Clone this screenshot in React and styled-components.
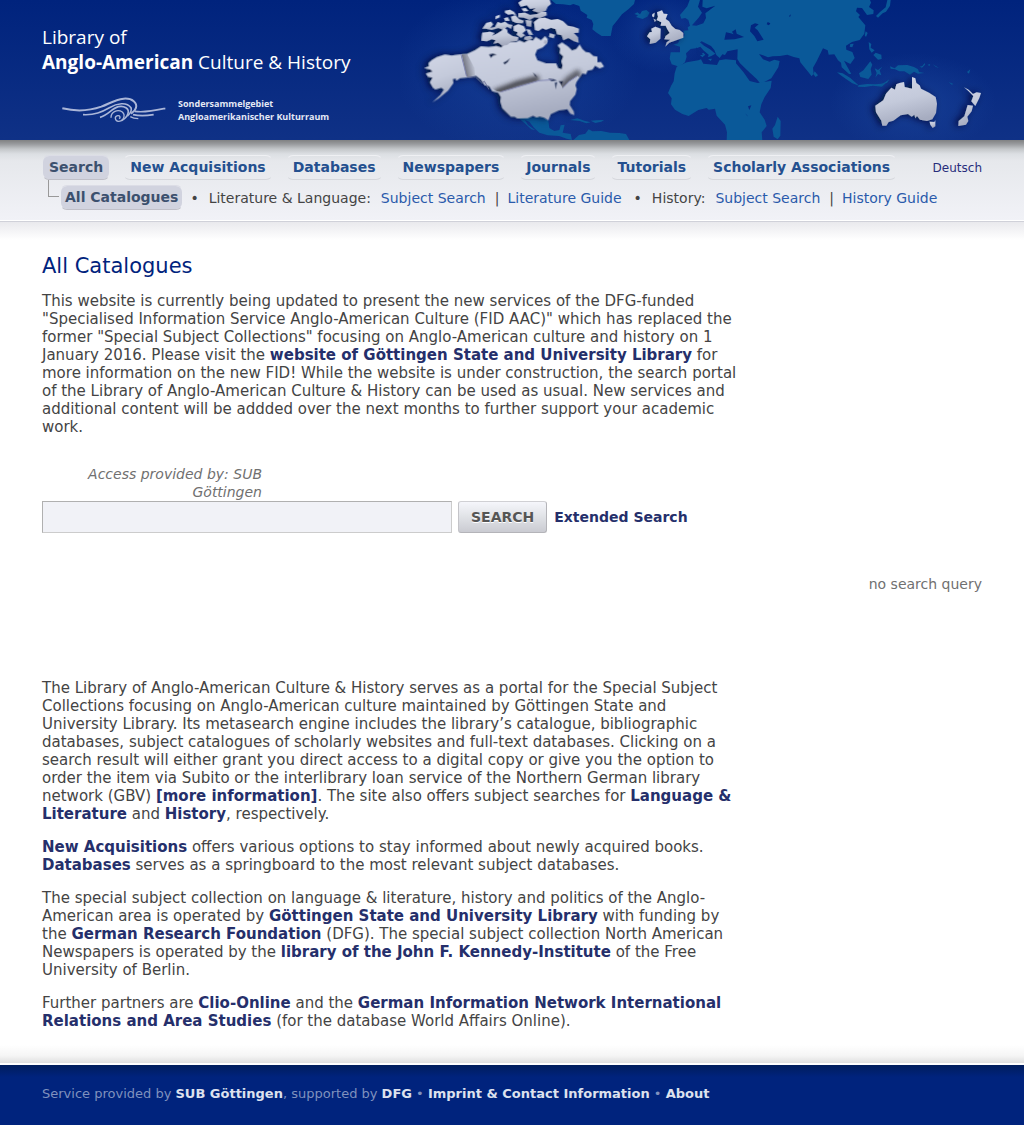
import React from 'react';
import styled, { createGlobalStyle } from 'styled-components';

const GlobalStyle = createGlobalStyle`
  *, *::before, *::after { box-sizing: border-box; }
  body {
    margin: 0;
    background: #fff;
    color: #444;
    font-family: "DejaVu Sans", Verdana, sans-serif;
    font-size: 15px;
    line-height: 18px;
  }
  a { text-decoration: none; color: inherit; }
`;

const Header = styled.header`
  display: flex;
  justify-content: space-between;
  height: 140px;
  overflow: hidden;
  padding-left: 42px;
  background: linear-gradient(#00237d, #0f3186);
  color: #fff;
`;

const Brand = styled.a`
  flex: none;
  padding-top: 25px;
  font-family: "Open Sans", "Noto Sans", sans-serif;
`;

const SiteName = styled.h1`
  margin: 0;
  font-size: 19px;
  font-weight: 400;
  line-height: 25px;
`;

const Sponsor = styled.div`
  display: flex;
  gap: 12px;
  margin-top: 22px;
  padding-left: 20px;
  font-size: 9px;
  font-weight: 700;
  line-height: 13px;
  color: #e4e9f5;
`;

const Map = styled.svg`
  flex: none;
  width: 624px;
  height: 140px;
`;

const NavPanel = styled.nav`
  display: grid;
  align-content: start;
  gap: 5px;
  min-height: 81px;
  padding: 15px 42px 10px;
  background: linear-gradient(#808182 0, #989a9d 4px, #c3c6c9 9px, #dcdfe3 14px, #e6e8ec 21px, #f1f2f7 80px);
  border-bottom: 1px solid #fff;
  font-size: 14px;
`;

const TopRow = styled.div`
  display: flex;
  justify-content: space-between;
  align-items: center;
`;

const MenuRow = styled.div`
  display: flex;
  flex-wrap: wrap;
  align-items: center;
  gap: ${(p) => p.$gap || 0}px;
`;

const MenuLink = styled.a`
  display: block;
  padding: 0 ${(p) => (p.$narrow ? 4 : 6)}px;
  border: 1px solid transparent;
  border-top-color: ${(p) => (p.$active ? '#dcdde6' : '#eff0f3')};
  border-bottom-color: ${(p) => (p.$active ? '#bfbfc8' : '#d5d7dc')};
  border-radius: 7px;
  background: ${(p) => (p.$active ? '#d1d3df' : 'transparent')};
  background-clip: padding-box;
  color: ${(p) => (p.$active ? '#3c506e' : '#24508f')};
  font-weight: 700;
  line-height: 23px;
`;

const Elbow = styled.span`
  align-self: flex-start;
  width: 11px;
  height: 17px;
  margin: -5px 1px 0 6px;
  border: solid #999;
  border-width: 0 0 1px 1px;
`;

const Dot = styled.span`
  margin: 0 10px 0 ${(p) => (p.$first ? 7 : 12)}px;
`;

const Topic = styled.span`
  margin-right: 10px;
`;

const Bar = styled.span`
  margin: 0 8px 0 9px;
`;

const SubLink = styled.a`
  color: #2a5aab;
`;

const Language = styled.a`
  color: #272d7b;
  font-size: 12px;
`;

const Main = styled.main`
  padding: 31px 42px 0;
  border-top: 1px solid #d0d1d9;
  background: linear-gradient(#e9e9ed, #fff 18px);
`;

const Column = styled.div`
  max-width: 700px;
`;

const Title = styled.h2`
  margin: 0 0 13px;
  color: #00237d;
  font-size: 21px;
  font-weight: 400;
  line-height: 26px;
`;

const Text = styled.p`
  margin: 0 0 15px;
`;

const Strong = styled.a`
  color: #252f6b;
  font-weight: 700;
`;

const Access = styled.p`
  width: 220px;
  margin: 29px 0 0;
  color: #707070;
  font-size: 14px;
  font-style: italic;
  text-align: right;
`;

const SearchForm = styled.form`
  display: flex;
  align-items: center;
  gap: 6px;
  font-size: 14px;
`;

const Query = styled.input`
  width: 410px;
  height: 32px;
  padding: 0 8px;
  border: 1px solid;
  border-color: #b0b0b0 #ccc #ccc #b0b0b0;
  background: #f1f2f7;
  font: inherit;
`;

const Submit = styled.button`
  height: 32px;
  padding: 0 12px;
  margin-right: 1px;
  border: 1px solid;
  border-color: #d0d0d4 #b4b4b9 #b4b4b9 #c4c4c9;
  border-radius: 3px;
  background: linear-gradient(#f5f6fb, #e0e2e6 50%, #cacbd2);
  color: #555;
  font: inherit;
  font-weight: 700;
  text-shadow: 0 1px 0 #fff;
`;

const Status = styled.p`
  margin: 42px 0 86px;
  color: #707070;
  font-size: 14px;
  text-align: right;
`;

const Fade = styled.div`
  height: 20px;
  background: linear-gradient(#fff, #f5f5f5 60%, #dfdfdf);
  border-bottom: 2px solid #fff;
`;

const Footer = styled.footer`
  min-height: 60px;
  padding: 20px 42px;
  background: linear-gradient(#001d5c, #00237d 12px);
  color: #7f91be;
  font-size: 13px;

  a {
    color: #dde1ee;
    font-weight: 700;
  }
`;

function WaveLogo() {
  return (
    <svg width="104" height="26" viewBox="0 0 312 78" fill="none" stroke="#aab6d8" strokeWidth="6" aria-hidden="true">
      <path d="M1 34C35 42 78 43 118 29C144 19 158 8 185 5C212 3 226 18 222 32C220 41 214 45 207 50" />
      <path d="M63 53C99 55 119 45 142 32C165 19 194 14 207 32C211 42 203 51 196 57" strokeWidth="5" />
      <path d="M114 61C139 54 148 35 169 29C186 25 203 35 198 49C195 61 186 67 178 71" strokeWidth="5" />
      <path d="M147 62C147 44 167 36 181 45C192 55 184 73 169 73C159 72 156 58 167 56C174 55 177 62 171 65" strokeWidth="4" />
      <path d="M218 43C249 48 278 41 310 34" strokeWidth="5" />
      <path d="M213 53C235 58 255 56 275 53" strokeWidth="5" />
      <path d="M205 59C211 63 220 65 229 65" strokeWidth="4" />
    </svg>
  );
}

function WorldMap() {
  return (
    <Map viewBox="0 0 1872 420" aria-hidden="true">
      <defs>
        <linearGradient id="silver" x1="0" y1="0" x2="0.3" y2="1">
          <stop offset="0" stopColor="#d2d7e7" />
          <stop offset="0.55" stopColor="#c4cadb" />
          <stop offset="1" stopColor="#a6acc0" />
        </linearGradient>
        <linearGradient id="alaskaFold" gradientUnits="userSpaceOnUse" x1="190" y1="200" x2="225" y2="193">
          <stop offset="0" stopColor="#555762" stopOpacity="0.8" />
          <stop offset="1" stopColor="#555762" stopOpacity="0" />
        </linearGradient>
        <clipPath id="aboveBorder">
          <path d="M183 163L300 120L590 130L590 190L545 236L532 228L508 244L488 264L476 241L458 239L417 242L302 276L289 273L254 254L203 232Z" />
        </clipPath>
        <filter id="lift" x="-20%" y="-20%" width="140%" height="140%">
          <feDropShadow dx="-9" dy="0" stdDeviation="11" floodColor="#000a30" floodOpacity="0.9" />
        </filter>
        <filter id="soft" x="-30%" y="-60%" width="160%" height="220%"><feGaussianBlur stdDeviation="6" /></filter>
        <radialGradient id="glow">
          <stop offset="0" stopColor="#1d4aa2" stopOpacity="0.55" />
          <stop offset="1" stopColor="#1d4aa2" stopOpacity="0" />
        </radialGradient>
      </defs>
      <ellipse cx="350" cy="210" rx="370" ry="250" fill="url(#glow)" />
      <ellipse cx="790" cy="90" rx="160" ry="130" fill="url(#glow)" />
      <ellipse cx="1540" cy="310" rx="250" ry="150" fill="url(#glow)" />

      <g fill="#0a5999">
        <path d="M453 0L468 12L489 13L510 16L520 12L538 18L542 32L562 45L560 53L575 60L580 72L577 88L590 98L605 108L632 108L638 78L652 61L666 43L686 27L702 12L705 0Z" />
        <path d="M355 354L385 350L400 352L415 350L430 352L445 362L448 384L463 393L478 390L482 376L494 374L488 398L512 402L516 420L500 416L477 408L443 406L418 398L402 383L388 365L375 360L384 375L406 391L394 388L376 371Z" />
        <path d="M510 360L532 355L553 362L572 367L559 370L539 363Z" />
        <path d="M572 362L589 361L612 360L604 365L586 369Z" />
        <path d="M520 420L537 405L556 401L566 388L577 394L604 393L630 398L658 399L678 402L688 420Z" />
        <g transform="translate(660 0)">
          <path d="M43 42L52 37L60 43L66 33L79 30L89 38L82 50L68 57L48 51L54 46Z" />
          <path fillRule="evenodd" d="M209 0L202 19L180 45L184 56L196 54L205 60L210 77L203 82L205 91L190 92L194 106L180 117L174 130L160 134L180 140L180 157L152 157L149 176L155 193L169 197L177 201L195 187L200 170L198 160L212 147L232 144L241 140L250 151L266 164L264 172L274 168L286 161L270 148L252 137L240 127L245 124L273 138L283 150L289 165L299 174L307 163L315 165L322 154L353 148L352 177L360 190L388 217L410 237L422 252L454 235L475 202L479 183L463 179L449 185L429 178L417 162L429 166L444 172L458 169L480 168L502 164L521 171L538 175L541 187L575 229L581 221L579 203L590 184L609 145L623 151L626 164L643 163L654 181L663 188L665 202L687 222L694 222L672 182L691 192L704 174L697 156L679 149L678 137L696 126L719 120L733 101L736 76L715 51L720 45L708 34L711 23L726 24L741 45L760 42L761 31L747 21L753 8L750 0Z
            M240 0L234 20L246 38L236 53L216 76L229 77L250 70L258 54L256 40L286 17L260 25L247 20L248 0Z
            M313 119L318 97L332 100L341 103L336 95L347 88L350 101L372 111L344 118Z
            M393 76L405 70L416 73L404 83L413 91L424 108L431 119L412 124L403 108L390 94Z
            M443 66L451 70L447 76L440 73Z M507 48L513 43L510 51Z" />
          <path d="M170 200L200 187L235 181L243 178L250 191L291 195L298 181L317 178L348 181L348 190L370 216L389 243L413 249L455 242L452 264L434 291L424 313L419 337L434 359L440 378L425 397L427 420L320 420L321 397L315 374L290 347L285 326L266 329L260 324L235 330L206 348L187 342L165 329L153 313L155 295L144 279L153 258L161 244L164 220Z" />
          <path d="M473 350L482 363L481 407L473 418L461 410L457 386L465 375Z" />
          <path d="M584 214L594 226L587 231L580 223Z" />
          <path d="M240 165L247 172L256 164L250 158Z M264 177L276 176L272 183Z" />
          <path fill="#082b82" d="M384 319L394 316L388 330Z M376 340L385 350L380 346Z M228 141L237 156L250 165L232 165Z" />
        </g>
        <g transform="translate(1260 0)">
          <path d="M202 0L212 0L210 17L198 35L188 40L174 53L168 48L180 36L197 22Z" />
          <path d="M137 94L143 99L138 111L134 106Z M91 132L101 131L97 142L89 140Z M146 126L154 132L152 143L164 151L155 158L148 148Z M167 158L184 164L185 177L174 179L160 165Z" />
          <path d="M51 217L68 220L90 233L108 249L117 257L97 250L78 237L62 226Z M117 255L142 252L165 253L184 251L202 245L186 260L159 257L134 261L113 260Z" />
          <path d="M151 184L157 194L152 207L155 224L145 237L121 231L117 220L130 211Z" />
          <path d="M164 205L174 210L187 200L179 211L184 226L174 222L166 233L170 219Z" />
          <path d="M210 199L224 205L234 196L262 195L282 201L294 208L297 216L313 219L294 221L282 215L270 224L253 214L238 214L225 208L212 206Z" />
          <path d="M299 200L307 198L314 189L315 194L306 203Z M323 194L331 192L328 198Z M338 193L357 204L348 201Z M386 246L400 252L395 254Z M441 216L451 208L447 221Z M192 249L208 238L201 249Z" />
        </g>
      </g>

      <g fill="url(#silver)" filter="url(#lift)">
        <path d="M183 163L155 167L135 164L111 171L96 180L86 189L87 199L73 204L91 208L98 215L78 221L84 230L98 233L90 247L99 263L106 268L124 263L132 269L121 285L97 307L116 295L144 272L160 249L158 237L167 235L169 242L180 234L203 232Z" />
        <path fillRule="evenodd" d="M183 163L201 162L225 151L243 139L266 141L289 138L304 143L312 133L330 126L349 126L358 122L373 128L388 119L399 122L407 111L423 121L435 109L443 117L440 131L428 142L411 149L405 164L412 181L437 190L468 190L474 204L485 208L488 196L484 184L490 169L479 159L481 146L473 136L486 128L504 140L516 152L529 147L539 134L547 147L557 156L568 158L580 168L592 170L592 187L603 186L612 200L599 205L585 197L577 209L562 212L558 222L547 220L529 246L526 256L530 267L526 284L510 303L509 315L521 334L523 345L511 341L502 327L476 331L452 342L445 361L433 353L419 349L410 352L399 347L383 354L352 355L344 350L333 350L320 337L307 324L301 304L303 291L295 278L277 273L268 258L254 255L243 239L228 227L203 232Z
          M266 163L278 160L291 164L278 168L273 174Z M309 188L318 183L331 174L323 187L314 194Z M398 217L407 224L413 234L405 229Z M444 235L462 237L472 242L454 244Z M464 248L472 246L467 269Z M475 243L490 243L486 257Z" />
        <g transform="translate(225 0)">
          <path d="M130 8L142 0L224 0L228 12L218 20L212 33L192 38L172 32L182 24L165 27L156 16L137 20Z" />
          <path d="M130 40L150 38L165 45L187 42L198 36L214 36L215 46L195 54L178 52L164 60L147 53L130 52Z M90 32L105 29L117 36L123 46L112 42L100 44L90 38Z M140 26L152 24L160 33L146 34Z" />
          <path d="M62 49L74 44L74 52L61 58Z M108 50L121 46L132 58L146 62L143 70L124 69L112 64Z M87 55L98 52L104 62L91 63Z M152 60L170 62L168 80L155 78Z" />
          <path d="M22 86L34 69L48 65L54 73L46 84L60 81L68 66L78 70L90 65L100 73L112 75L108 86L96 80L86 90L70 84L50 90L32 86Z" />
          <path d="M22 98L45 95L58 99L51 107L64 102L80 92L87 84L96 89L98 99L112 108L130 112L128 122L106 125L97 135L82 137L70 128L55 131L62 121L50 118L36 124L19 122Z" />
          <path d="M116 79L130 73L146 79L153 91L142 100L150 106L138 113L125 104L128 97L116 92Z M154 88L165 89L174 105L162 104Z M150 110L166 107L174 115L158 121L147 118Z" />
          <path d="M177 66L192 55L210 53L229 60L248 57L264 64L278 77L295 80L312 86L311 98L296 99L309 112L311 128L297 124L280 114L265 121L260 106L246 103L242 88L228 83L213 89L202 85L190 93L180 90Z M224 100L240 104L236 115L222 111Z M208 120L218 122L214 132L206 130Z" />
        </g>
      </g>
      <path d="M185 163L202 163L224 205L225 226L203 232L198 226Z" fill="url(#alaskaFold)" />
      <g clipPath="url(#aboveBorder)" fill="none" stroke="#33343c" filter="url(#soft)">
        <path d="M284 278L352 252L417 235" strokeWidth="18" opacity="0.9" />
        <path d="M484 266L506 240L540 216" strokeWidth="22" opacity="0.7" />
      </g>
      <path d="M183 163L200 230M302 276L417 242L458 239M488 264L508 244L532 228" fill="none" stroke="#8388b4" strokeWidth="3" />
      <path d="M205 232L226 231L246 249L253 244L267 268" fill="none" stroke="#6a7197" strokeWidth="3" />

      <g transform="translate(660 0)" fill="url(#silver)" filter="url(#lift)">
        <path d="M111 37L126 31L131 41L143 42L137 57L147 64L155 77L166 87L179 90L190 99L190 113L171 120L148 128L136 140L140 127L151 119L133 118L137 108L149 99L142 88L137 77L122 77L124 67L110 60L114 50Z" />
        <path d="M106 80L122 86L121 116L107 128L89 132L91 118L81 109L89 97L96 96L94 86Z" />
        <path d="M97 43L104 38L102 52L96 49Z M101 56L109 61L104 66Z" />
      </g>
      <g transform="translate(1260 0)" fill="url(#silver)" filter="url(#lift)">
        <path d="M276 231L286 235L289 249L299 256L303 266L327 278L347 291L351 311L348 339L337 358L321 363L300 359L291 348L286 355L283 344L275 350L264 342L242 346L220 362L206 366L199 377L187 377L184 362L168 337L166 317L190 301L198 281L214 263L225 269L229 253L239 249L252 246L254 261L276 266Z" />
        <path d="M329 365L343 366L346 361L346 379L338 384L331 374Z" />
        <path d="M432 262L446 269L459 282L470 277L483 279L478 294L466 318L454 304L460 288L446 274Z M443 315L459 317L455 334L442 350L445 363L438 374L415 378L416 363L433 349Z" />
      </g>
    </Map>
  );
}

const sections = ['New Acquisitions', 'Databases', 'Newspapers', 'Journals', 'Tutorials', 'Scholarly Associations'];

export default function App() {
  return (
    <>
      <GlobalStyle />
      <Header>
        <Brand href="#">
          <SiteName>Library of<br /><b>Anglo-American</b> Culture &amp; History</SiteName>
          <Sponsor>
            <WaveLogo />
            <span>Sondersammelgebiet<br />Angloamerikanischer Kulturraum</span>
          </Sponsor>
        </Brand>
        <WorldMap />
      </Header>

      <NavPanel>
        <TopRow>
          <MenuRow $gap={13}>
            <MenuLink href="#" $active>Search</MenuLink>
            {sections.map((name) => <MenuLink href="#" key={name}>{name}</MenuLink>)}
          </MenuRow>
          <Language href="#">Deutsch</Language>
        </TopRow>
        <MenuRow>
          <Elbow />
          <MenuLink href="#" $active $narrow>All Catalogues</MenuLink>
          <Dot $first>•</Dot>
          <Topic>Literature &amp; Language:</Topic>
          <SubLink href="#">Subject Search</SubLink>
          <Bar>|</Bar>
          <SubLink href="#">Literature Guide</SubLink>
          <Dot>•</Dot>
          <Topic>History:</Topic>
          <SubLink href="#">Subject Search</SubLink>
          <Bar>|</Bar>
          <SubLink href="#">History Guide</SubLink>
        </MenuRow>
      </NavPanel>

      <Main>
        <Column>
          <Title>All Catalogues</Title>
          <Text>
            This website is currently being updated to present the new services of the DFG-funded
            "Specialised Information Service Anglo-American Culture (FID AAC)" which has replaced the
            former "Special Subject Collections" focusing on Anglo-American culture and history on 1
            January 2016. Please visit the <Strong href="#">website of Göttingen State and University Library</Strong> for
            more information on the new FID! While the website is under construction, the search portal
            of the Library of Anglo-American Culture &amp; History can be used as usual. New services and
            additional content will be addded over the next months to further support your academic
            work.
          </Text>
          <Access>Access provided by: SUB Göttingen</Access>
          <SearchForm onSubmit={(e) => e.preventDefault()}>
            <Query type="text" aria-label="Search all catalogues" />
            <Submit type="submit">SEARCH</Submit>
            <Strong href="#">Extended Search</Strong>
          </SearchForm>
        </Column>
        <Status>no search query</Status>
        <Column>
          <Text>
            The Library of Anglo-American Culture &amp; History serves as a portal for the Special Subject
            Collections focusing on Anglo-American culture maintained by Göttingen State and
            University Library. Its metasearch engine includes the library’s catalogue, bibliographic
            databases, subject catalogues of scholarly websites and full-text databases. Clicking on a
            search result will either grant you direct access to a digital copy or give you the option to
            order the item via Subito or the interlibrary loan service of the Northern German library
            network (GBV) <Strong href="#">[more information]</Strong>. The site also offers subject searches
            for <Strong href="#">Language &amp; Literature</Strong> and <Strong href="#">History</Strong>, respectively.
          </Text>
          <Text>
            <Strong href="#">New Acquisitions</Strong> offers various options to stay informed about newly acquired
            books. <Strong href="#">Databases</Strong> serves as a springboard to the most relevant subject databases.
          </Text>
          <Text>
            The special subject collection on language &amp; literature, history and politics of the
            Anglo-American area is operated by <Strong href="#">Göttingen State and University Library</Strong> with
            funding by the <Strong href="#">German Research Foundation</Strong> (DFG). The special subject collection
            North American Newspapers is operated by
            the <Strong href="#">library of the John F. Kennedy-Institute</Strong> of the Free University of Berlin.
          </Text>
          <Text>
            Further partners are <Strong href="#">Clio-Online</Strong> and
            the <Strong href="#">German Information Network International Relations and Area Studies</Strong> (for
            the database World Affairs Online).
          </Text>
        </Column>
      </Main>
      <Fade />
      <Footer>
        Service provided by <a href="#">SUB Göttingen</a>, supported by <a href="#">DFG</a> • <a href="#">Imprint &amp; Contact Information</a> • <a href="#">About</a>
      </Footer>
    </>
  );
}
